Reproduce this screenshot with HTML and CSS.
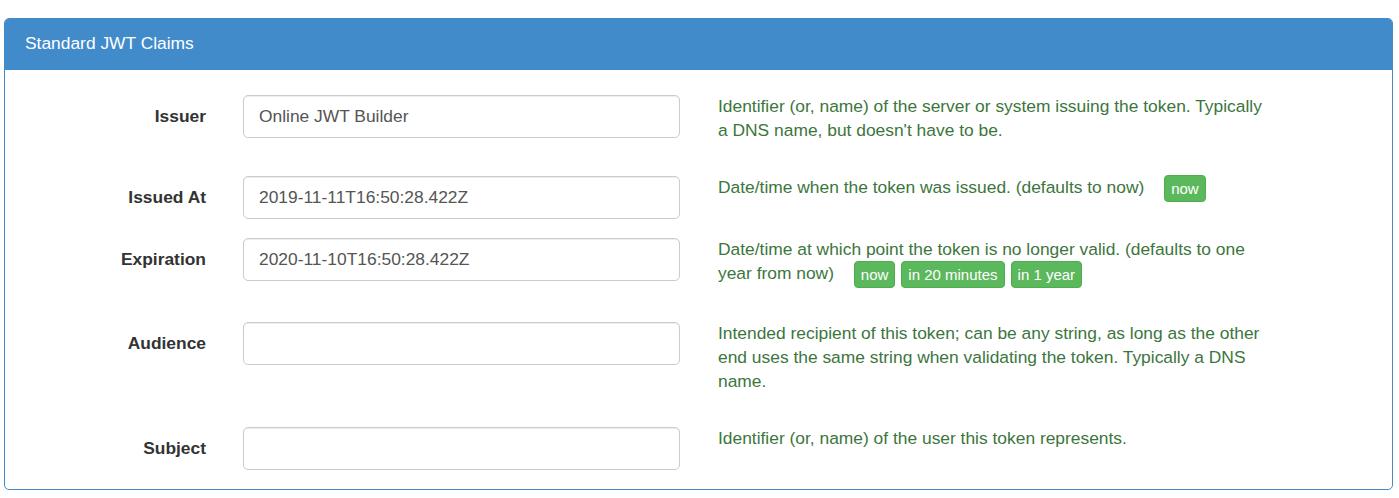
FILE: index.html
```html
<!DOCTYPE html>
<html>
<head>
<meta charset="utf-8">
<link rel="stylesheet" href="styles.css">
</head>
<body>
<div class="panel">
  <div class="panel-heading">Standard JWT Claims</div>
  <div class="panel-body">
    <div class="row">
      <label class="lbl">Issuer</label>
      <div class="field"><input class="ctrl" type="text" value="Online JWT Builder"></div>
      <div class="help">Identifier (or, name) of the server or system issuing the token. Typically a DNS name, but doesn't have to be.</div>
    </div>
    <div class="row">
      <label class="lbl">Issued At</label>
      <div class="field"><input class="ctrl" type="text" value="2019-11-11T16:50:28.422Z"></div>
      <div class="help">Date/time when the token was issued. (defaults to now) <span class="btns"><button class="btn">now</button></span></div>
    </div>
    <div class="row">
      <label class="lbl">Expiration</label>
      <div class="field"><input class="ctrl" type="text" value="2020-11-10T16:50:28.422Z"></div>
      <div class="help">Date/time at which point the token is no longer valid. (defaults to one year from now) <span class="btns"><button class="btn">now</button><button class="btn">in 20 minutes</button><button class="btn">in 1 year</button></span></div>
    </div>
    <div class="row">
      <label class="lbl">Audience</label>
      <div class="field"><input class="ctrl" type="text" value=""></div>
      <div class="help">Intended recipient of this token; can be any string, as long as the other end uses the same string when validating the token. Typically a DNS name.</div>
    </div>
    <div class="row">
      <label class="lbl">Subject</label>
      <div class="field"><input class="ctrl" type="text" value=""></div>
      <div class="help">Identifier (or, name) of the user this token represents.</div>
    </div>
  </div>
</div>
</body>
</html>
```

FILE: styles.css
```css
html, body {
  margin: 0;
  padding: 0;
  background: #fff;
}
body {
  font-family: "Liberation Sans", Arial, sans-serif;
  font-size: 17.4px;
  line-height: 24px;
  color: #333;
  padding: 18px 0 0 4px;
}
.panel {
  width: 1387px;
  border: 1px solid #428bca;
  border-radius: 5px;
  box-sizing: content-box;
}
.panel-heading {
  background: #428bca;
  color: #fff;
  height: 51px;
  line-height: 48px;
  padding: 0 20px;
  border-radius: 4px 4px 0 0;
  font-size: 17.4px;
}
.panel-body {
  padding: 25px 0 0 0;
}
.row {
  display: flex;
  align-items: flex-start;
  margin-bottom: 19px;
}
.lbl {
  width: 201px;
  flex: none;
  text-align: right;
  font-weight: bold;
  padding-top: 9px;
  line-height: 24px;
}
.field {
  flex: none;
  width: 437px;
  margin-left: 37px;
}
.ctrl {
  display: block;
  width: 100%;
  height: 43px;
  box-sizing: border-box;
  padding: 0 15px;
  font-family: "Liberation Sans", Arial, sans-serif;
  font-size: 17.4px;
  color: #555;
  border: 1px solid #ccc;
  border-radius: 5px;
  box-shadow: inset 0 1px 1px rgba(0,0,0,0.075);
  background: #fff;
  outline: none;
}
.help {
  flex: none;
  width: 552px;
  margin-left: 38px;
  margin-top: -1px;
  margin-bottom: 15px;
  color: #3c763d;
}
.btns {
  margin-left: 15px;
  display: inline-flex;
  gap: 6px;
  vertical-align: -1px;
}
.btn {
  font-family: "Liberation Sans", Arial, sans-serif;
  font-size: 15px;
  line-height: 23px;
  height: 27px;
  padding: 0 6px;
  color: #fff;
  background: #5cb85c;
  border: 1px solid #4cae4c;
  border-radius: 4px;
  cursor: pointer;
}
```
